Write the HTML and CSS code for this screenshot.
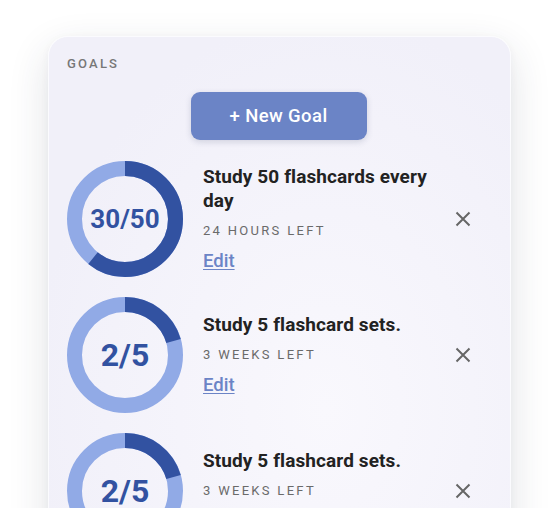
FILE: index.html
```html
<!DOCTYPE html>
<html lang="en">
<head>
<meta charset="utf-8">
<title>Goals</title>
<link rel="stylesheet" href="styles.css">
</head>
<body>
<div class="page">
  <section class="card">
    <h2 class="label">GOALS</h2>
    <div class="actions">
      <button class="new-goal">+ New Goal</button>
    </div>
    <ul class="goals">
      <li class="goal">
        <div class="ring">
          <svg viewBox="0 0 116 116" width="116" height="116">
            <circle class="track" cx="58" cy="58" r="50.5"/>
            <circle class="bar" cx="58" cy="58" r="50.5" style="stroke-dasharray: 193 317.3"/>
          </svg>
          <span class="ring-text small">30/50</span>
        </div>
        <div class="info">
          <div class="title">Study 50 flashcards every day</div>
          <div class="meta">24 HOURS LEFT</div>
          <a class="edit" href="#">Edit</a>
        </div>
        <button class="close" aria-label="Remove">
          <svg viewBox="0 0 16 16" width="16" height="16"><path d="M1.5 1.5 L14.5 14.5 M14.5 1.5 L1.5 14.5"/></svg>
        </button>
      </li>
      <li class="goal">
        <div class="ring">
          <svg viewBox="0 0 116 116" width="116" height="116">
            <circle class="track" cx="58" cy="58" r="50.5"/>
            <circle class="bar" cx="58" cy="58" r="50.5" style="stroke-dasharray: 65 317.3"/>
          </svg>
          <span class="ring-text">2/5</span>
        </div>
        <div class="info">
          <div class="title">Study 5 flashcard sets.</div>
          <div class="meta">3 WEEKS LEFT</div>
          <a class="edit" href="#">Edit</a>
        </div>
        <button class="close" aria-label="Remove">
          <svg viewBox="0 0 16 16" width="16" height="16"><path d="M1.5 1.5 L14.5 14.5 M14.5 1.5 L1.5 14.5"/></svg>
        </button>
      </li>
      <li class="goal">
        <div class="ring">
          <svg viewBox="0 0 116 116" width="116" height="116">
            <circle class="track" cx="58" cy="58" r="50.5"/>
            <circle class="bar" cx="58" cy="58" r="50.5" style="stroke-dasharray: 65 317.3"/>
          </svg>
          <span class="ring-text">2/5</span>
        </div>
        <div class="info">
          <div class="title">Study 5 flashcard sets.</div>
          <div class="meta">3 WEEKS LEFT</div>
          <a class="edit" href="#">Edit</a>
        </div>
        <button class="close" aria-label="Remove">
          <svg viewBox="0 0 16 16" width="16" height="16"><path d="M1.5 1.5 L14.5 14.5 M14.5 1.5 L1.5 14.5"/></svg>
        </button>
      </li>
    </ul>
  </section>
</div>
</body>
</html>
```
FILE: styles.css
```css
* { box-sizing: border-box; }
html, body {
  margin: 0;
  padding: 0;
  background: #ffffff;
  font-family: Roboto, "Liberation Sans", sans-serif;
  overflow: hidden;
}
.page {
  padding: 36px 0 0 48px;
}
.card {
  width: 463px;
  border-radius: 20px;
  background: radial-gradient(ellipse at 60% 70%, #f9f8fd 0%, #f1f0f9 75%);
  border: 1px solid #fbfbfe;
  box-shadow: 0 14px 40px rgba(40, 50, 70, 0.14), 0 2px 8px rgba(40, 50, 70, 0.04);
  padding: 19px 23px 20px 18px;
}
.label {
  margin: 0;
  font-size: 13px;
  line-height: 16px;
  font-weight: 500;
  letter-spacing: 2.2px;
  color: #777;
}
.actions {
  display: flex;
  justify-content: center;
  margin-top: 20px;
  padding-left: 3px;
}
.new-goal {
  width: 176px;
  height: 48px;
  border: none;
  border-radius: 9px;
  background: #6b84c6;
  color: #fff;
  font-family: inherit;
  font-size: 18.5px;
  font-weight: 500;
  letter-spacing: 0.4px;
  box-shadow: 0 2px 6px rgba(50, 60, 100, 0.18);
}
.goals {
  list-style: none;
  margin: 21px 0 0;
  padding: 0;
  display: flex;
  flex-direction: column;
  gap: 20px;
}
.goal {
  display: flex;
  align-items: center;
}
.ring {
  position: relative;
  width: 116px;
  height: 116px;
  flex: none;
}
.ring svg {
  display: block;
  transform: rotate(-90deg);
}
.track {
  fill: none;
  stroke: #91aae6;
  stroke-width: 15;
}
.bar {
  fill: none;
  stroke: #3252a1;
  stroke-width: 15;
}
.ring-text {
  position: absolute;
  inset: 0;
  display: flex;
  align-items: center;
  justify-content: center;
  color: #3252a1;
  font-size: 32px;
  font-weight: 700;
}
.ring-text.small {
  font-size: 26px;
}
.info {
  flex: 1;
  margin-left: 20px;
  display: flex;
  flex-direction: column;
  align-items: flex-start;
}
.title {
  font-size: 19px;
  line-height: 24px;
  font-weight: 700;
  letter-spacing: 0.1px;
  color: #222;
}
.meta {
  margin-top: 10px;
  font-size: 13px;
  line-height: 16px;
  letter-spacing: 2.3px;
  color: #6a6a6a;
}
.edit {
  margin-top: 10px;
  font-size: 18.5px;
  line-height: 24px;
  font-weight: 500;
  color: #6b84c6;
  text-decoration: underline;
  text-underline-offset: 2px;
}
.close {
  flex: none;
  width: 48px;
  height: 48px;
  padding: 0;
  border: none;
  background: transparent;
  display: flex;
  align-items: center;
  justify-content: center;
}
.close path {
  stroke: #666;
  stroke-width: 2;
  fill: none;
}
```
